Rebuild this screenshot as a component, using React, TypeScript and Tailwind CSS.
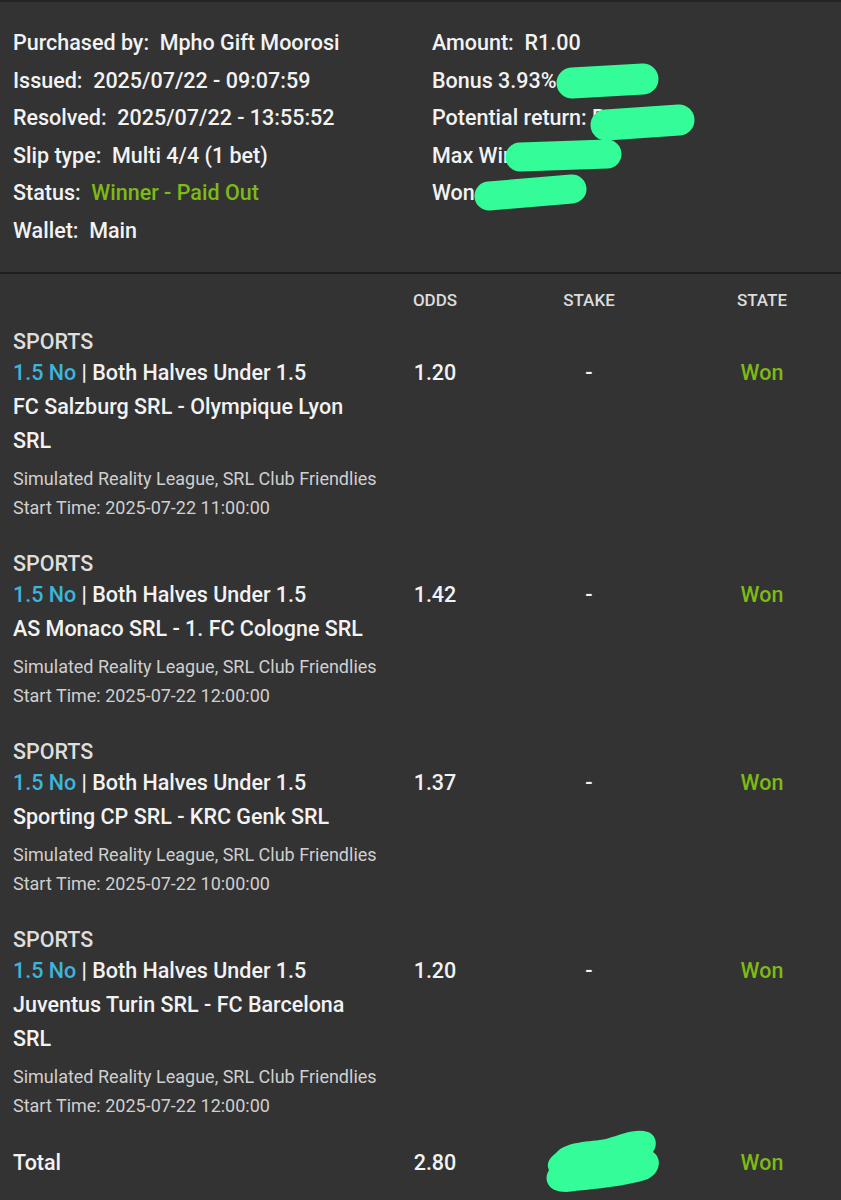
import React from 'react'

const font = { fontFamily: 'Roboto, "Noto Sans", sans-serif' }

type Leg = {
  selection: string
  market: string
  teams: string
  odds: string
}

const legs: Leg[] = [
  { selection: '1.5 No', market: 'Both Halves Under 1.5', teams: 'FC Salzburg SRL - Olympique Lyon SRL', odds: '1.20' },
  { selection: '1.5 No', market: 'Both Halves Under 1.5', teams: 'AS Monaco SRL - 1. FC Cologne SRL', odds: '1.42' },
  { selection: '1.5 No', market: 'Both Halves Under 1.5', teams: 'Sporting CP SRL - KRC Genk SRL', odds: '1.37' },
  { selection: '1.5 No', market: 'Both Halves Under 1.5', teams: 'Juventus Turin SRL - FC Barcelona SRL', odds: '1.20' },
]

const times = ['2025-07-22 11:00:00', '2025-07-22 12:00:00', '2025-07-22 10:00:00', '2025-07-22 12:00:00']

function Row({ label, value, green }: { label: string; value?: string; green?: boolean }) {
  return (
    <div className="whitespace-pre">
      {label}
      {value && <span className={green ? 'text-[#7dba14]' : ''}>{value}</span>}
    </div>
  )
}

function Blob({ x1, y1, x2, y2, w }: { x1: number; y1: number; x2: number; y2: number; w: number }) {
  return (
    <line x1={x1} y1={y1} x2={x2} y2={y2} stroke="#33fc98" strokeWidth={w} strokeLinecap="round" />
  )
}

export default function App() {
  return (
    <div className="relative w-[841px] min-h-[1200px] bg-[#333333] text-[#f2f2f2] font-medium" style={font}>
      <div className="border-t-2 border-[#242424]" />

      {/* summary */}
      <div className="flex pt-[22px] pb-[23px] text-[21.5px] leading-[37.5px]">
        <div className="w-[419px] pl-[13px]">
          <Row label="Purchased by:  " value="Mpho Gift Moorosi" />
          <Row label="Issued:  " value="2025/07/22 - 09:07:59" />
          <Row label="Resolved:  " value="2025/07/22 - 13:55:52" />
          <Row label="Slip type:  " value="Multi 4/4 (1 bet)" />
          <Row label="Status:  " value="Winner - Paid Out" green />
          <Row label="Wallet:  " value="Main" />
        </div>
        <div className="pl-[13px]">
          <Row label="Amount:  " value="R1.00" />
          <Row label="Bonus 3.93%" />
          <Row label="Potential return: R" />
          <Row label="Max Win" />
          <Row label="Won" />
        </div>
      </div>

      <div className="border-t-2 border-[#1f1f1f]" />

      {/* table header */}
      <div className="flex pt-[14px] pb-[16px] text-[17px] leading-[24px] text-[#dcdcdc]">
        <div className="w-[388px]" />
        <div className="w-[94px] text-center">ODDS</div>
        <div className="w-[214px] text-center">STAKE</div>
        <div className="w-[132px] text-center">STATE</div>
      </div>

      {legs.map((leg, i) => (
        <div key={i} className="flex pb-[28px]">
          <div className="w-[388px] pl-[13px] pr-[8px]">
            <div className="text-[21.5px] leading-[28px] text-[#dedede]">SPORTS</div>
            <div className="text-[21.5px] leading-[34px] whitespace-nowrap">
              <span className="text-[#3cb5dc]">{leg.selection}</span> | {leg.market}
            </div>
            <div className="text-[21.5px] leading-[34px]">{leg.teams}</div>
            <div className="mt-[6px] text-[18px] leading-[29px] text-[#cfcfcf] font-normal">
              Simulated Reality League, SRL Club Friendlies
            </div>
            <div className="text-[18px] leading-[29px] text-[#cfcfcf] font-normal">Start Time: {times[i]}</div>
          </div>
          <div className="w-[94px] pt-[28px] text-center text-[21.5px] leading-[34px]">{leg.odds}</div>
          <div className="w-[214px] pt-[28px] text-center text-[21.5px] leading-[34px]">-</div>
          <div className="w-[132px] pt-[28px] text-center text-[21.5px] leading-[34px] text-[#7dba14]">Won</div>
        </div>
      ))}

      {/* total */}
      <div className="flex text-[21.5px] leading-[30px]">
        <div className="w-[388px] pl-[13px]">Total</div>
        <div className="w-[94px] text-center">2.80</div>
        <div className="w-[214px] text-center" />
        <div className="w-[132px] text-center text-[#7dba14]">Won</div>
      </div>

      {/* redactions */}
      <svg className="absolute left-0 top-0 pointer-events-none" width={841} height={1200}>
        <Blob x1={572} y1={83} x2={643} y2={79} w={31} />
        <Blob x1={606} y1={125} x2={679} y2={120} w={31} />
        <Blob x1={520} y1={157} x2={607} y2={154} w={29} />
        <Blob x1={489} y1={196} x2={572} y2={189} w={29} />
        <path
          d="M556 1153 C566 1141 590 1142 606 1139 C622 1134 636 1128 648 1132 C658 1136 657 1147 653 1152 C662 1158 661 1172 648 1179 C628 1186 594 1189 566 1192 C548 1192 543 1180 549 1170 C546 1164 549 1158 556 1153 Z"
          fill="#33fc98"
        />
      </svg>
    </div>
  )
}
